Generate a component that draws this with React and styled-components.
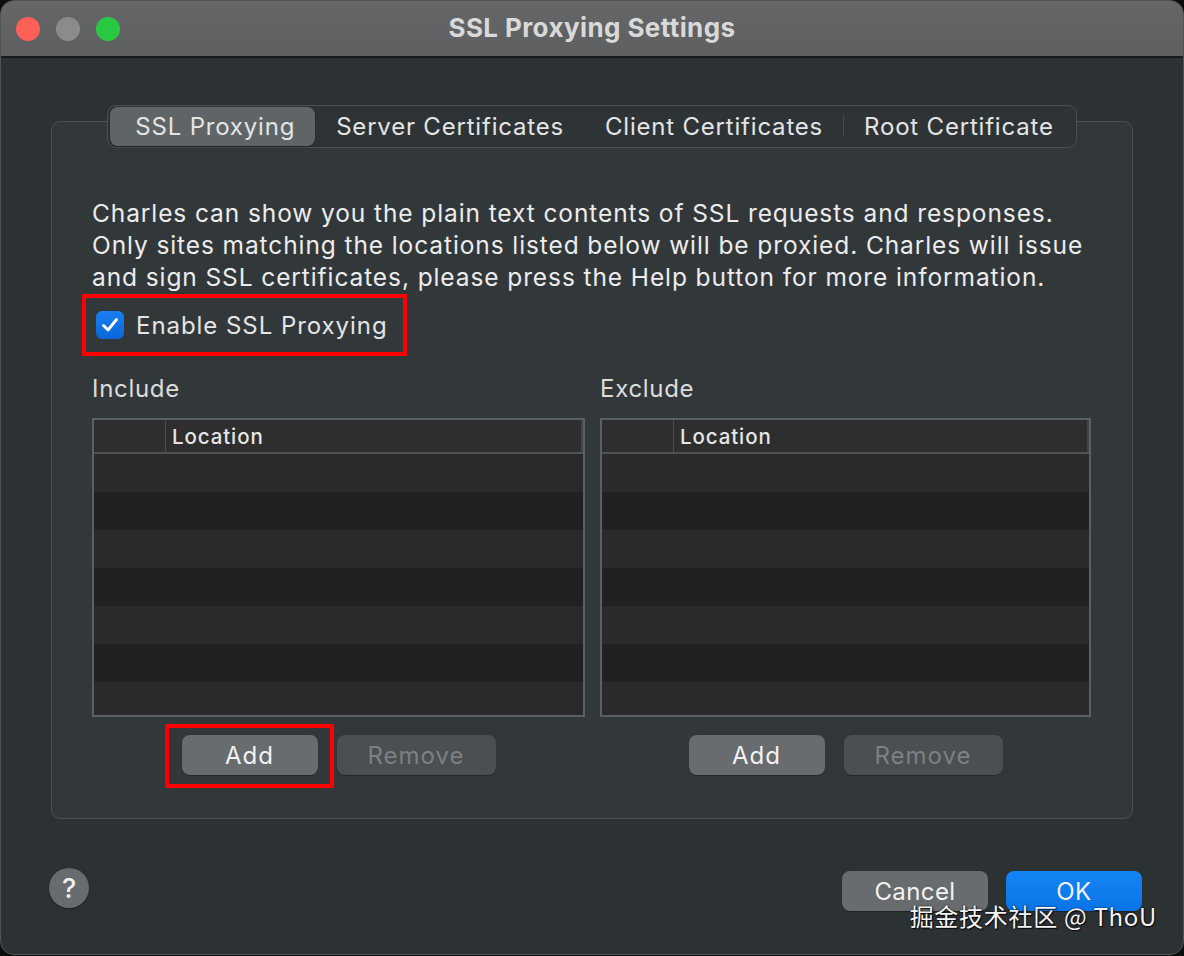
import React from "react";
import styled, { createGlobalStyle } from "styled-components";

const GlobalStyle = createGlobalStyle`
  html, body { margin: 0; padding: 0; background: #0d0e0f; }
  body { font-family: Inter, "Noto Sans", "Noto Sans CJK SC", sans-serif; -webkit-font-smoothing: antialiased; }
  * { box-sizing: border-box; }
`;

const Window = styled.div`
  position: relative;
  width: 1184px;
  height: 955px;
  border-radius: 14px;
  overflow: hidden;
  background: #2c3133;
  border: 1px solid #4e5355;
  display: flex;
  flex-direction: column;
`;

const TitleBar = styled.div`
  height: 57px;
  flex: none;
  background: linear-gradient(#646668, #5d5f61);
  border-bottom: 2px solid #17191a;
  display: grid;
  grid-template-columns: 1fr auto 1fr;
  align-items: center;
`;

const Lights = styled.div`
  display: flex;
  gap: 16px;
  padding-left: 15px;
`;

const Light = styled.span`
  width: 24px;
  height: 24px;
  border-radius: 50%;
  background: ${(p) => p.$color};
`;

const Title = styled.div`
  font-size: 26px;
  font-weight: 700;
  color: #d9d9d9;
  letter-spacing: 0.4px;
  margin-top: -2px;
`;

const Body = styled.div`
  flex: 1;
  display: flex;
  flex-direction: column;
  padding-top: 47px;
`;

const TabArea = styled.div`
  margin: 0 50px;
  display: flex;
  flex-direction: column;
  align-items: center;
`;

const TabBar = styled.div`
  position: relative;
  z-index: 1;
  display: flex;
  align-items: center;
  height: 43px;
  padding: 0 2px;
  border: 1px solid #4a4f51;
  border-radius: 9px;
  background: #2e3436;
`;

const Tab = styled.div`
  height: 39px;
  display: flex;
  align-items: center;
  padding: 0 20px 0 ${(p) => (p.$first ? 25 : 21)}px;
  font-size: 24px;
  letter-spacing: 0.8px;
  color: #e4e4e4;
  border-radius: 8px;
  background: ${(p) => (p.$active ? "#5f6466" : "transparent")};
  box-shadow: ${(p) => (p.$active ? "0 1px 2px rgba(0,0,0,0.35)" : "none")};
  position: relative;
  & + &::before {
    content: "";
    position: absolute;
    left: 0;
    top: 9px;
    bottom: 9px;
    width: 1px;
    background: ${(p) => (p.$afterActive ? "transparent" : "#464b4d")};
  }
`;

const GroupBox = styled.div`
  align-self: stretch;
  margin-top: -27px;
  height: 698px;
  border: 1.5px solid #4a5052;
  border-radius: 9px;
  background: #32383a;
  padding: 75px 41px 0 40px;
  display: flex;
  flex-direction: column;
`;

const Paragraph = styled.p`
  margin: 0;
  font-size: 24.5px;
  letter-spacing: 0.9px;
  line-height: 32px;
  color: #ececec;
  white-space: nowrap;
`;

const CheckRow = styled.label`
  position: relative;
  margin-top: 18px;
  margin-left: 4px;
  align-self: flex-start;
  display: flex;
  align-items: center;
  gap: 12px;
  height: 28px;
  font-size: 24px;
  letter-spacing: 0.95px;
  color: #e4e4e4;
  &::after {
    content: "";
    position: absolute;
    left: -14px;
    right: -19px;
    top: -17px;
    bottom: -17px;
    border: 4px solid #ff0000;
  }
`;

const CheckBox = styled.span`
  width: 28px;
  height: 28px;
  border-radius: 6px;
  background: linear-gradient(#1a7ff2, #0a66d8);
  display: flex;
  align-items: center;
  justify-content: center;
`;

const Columns = styled.div`
  margin-top: 34px;
  display: grid;
  grid-template-columns: 493px 491px;
  column-gap: 15px;
`;

const Column = styled.div`
  display: flex;
  flex-direction: column;
`;

const Label = styled.div`
  font-size: 24px;
  letter-spacing: 0.7px;
  line-height: 32px;
  color: #dcdcdc;
`;

const Table = styled.div`
  margin-top: 13px;
  height: 299px;
  border: 2px solid #5c6062;
  background: #2a2a2a;
  display: flex;
  flex-direction: column;
  overflow: hidden;
`;

const Header = styled.div`
  height: 34px;
  flex: none;
  background: #2e2e2e;
  border-bottom: 2px solid #4f5355;
  display: flex;
  align-items: center;
`;

const HeaderCell = styled.div`
  height: 100%;
  display: flex;
  align-items: center;
  width: ${(p) => p.$width || "auto"};
  flex: ${(p) => (p.$grow ? 1 : "none")};
  padding-left: ${(p) => (p.$grow ? 6 : 0)}px;
  border-right: 1px solid #4d4d4d;
  font-size: 20.5px;
  letter-spacing: 0.9px;
  font-weight: 500;
  color: #e6e6e6;
  border-right-width: ${(p) => (p.$grow ? "2px" : "1px")};
  &:last-child { border-right-color: #444; }
`;

const Row = styled.div`
  height: 38px;
  flex: none;
  background: ${(p) => (p.$odd ? "#212121" : "#2a2a2a")};
`;

const ButtonRow = styled.div`
  margin-top: 18px;
  display: flex;
  justify-content: center;
  gap: 19px;
`;

const Button = styled.button`
  position: relative;
  height: 40px;
  width: ${(p) => p.$width}px;
  border: none;
  border-radius: 8px;
  font-family: inherit;
  font-size: 24px;
  letter-spacing: ${(p) => p.$spacing ?? 1}px;
  padding: 0;
  background: ${(p) =>
    p.$primary ? "linear-gradient(#1585f5, #0a74e6)" : p.$disabled ? "#4a4f51" : "#686c6e"};
  color: ${(p) => (p.$disabled ? "#7c8082" : "#f2f2f2")};
  box-shadow: 0 1px 1px rgba(0, 0, 0, 0.3);
  ${(p) =>
    p.$highlight &&
    `&::after {
      content: "";
      position: absolute;
      left: -17px;
      right: -16px;
      top: -11px;
      bottom: -13px;
      border: 4px solid #ff0000;
    }`}
`;

const Footer = styled.div`
  margin-top: 49px;
  padding: 0 41px 0 48px;
  display: flex;
  justify-content: space-between;
  align-items: flex-start;
`;

const HelpButton = styled.div`
  width: 40px;
  height: 40px;
  border-radius: 50%;
  background: #686c6e;
  color: #f0f0f0;
  font-size: 27px;
  font-weight: 500;
  display: flex;
  align-items: center;
  justify-content: center;
  box-shadow: 0 1px 2px rgba(0, 0, 0, 0.35);
`;

const DialogButtons = styled.div`
  margin-top: 3px;
  display: flex;
  gap: 18px;
`;

const Watermark = styled.div`
  position: absolute;
  right: 26px;
  top: 899px;
  font-size: 24px;
  line-height: 32px;
  color: #f4f4f4;
  font-family: "Noto Sans CJK SC", Inter, sans-serif;
  text-shadow: 0 0 2px rgba(0,0,0,0.9), 1px 1px 1px rgba(0,0,0,0.8);
  letter-spacing: 0.7px;
`;

function LocationTable() {
  const rows = [0, 1, 2, 3, 4, 5, 6];
  return (
    <Table>
      <Header>
        <HeaderCell $width="72px" />
        <HeaderCell $grow>Location</HeaderCell>
      </Header>
      {rows.map((r) => (
        <Row key={r} $odd={r % 2 === 1} />
      ))}
    </Table>
  );
}

export default function App() {
  const tabs = ["SSL Proxying", "Server Certificates", "Client Certificates", "Root Certificate"];
  return (
    <>
      <GlobalStyle />
      <Window>
        <TitleBar>
          <Lights>
            <Light $color="#fe5f57" />
            <Light $color="#8a8b8d" />
            <Light $color="#28c840" />
          </Lights>
          <Title>SSL Proxying Settings</Title>
          <div />
        </TitleBar>
        <Body>
          <TabArea>
            <TabBar>
              {tabs.map((t, i) => (
                <Tab key={t} $active={i === 0} $first={i === 0} $afterActive={i === 1}>
                  {t}
                </Tab>
              ))}
            </TabBar>
            <GroupBox>
              <Paragraph>
                Charles can show you the plain text contents of SSL requests and responses.
                <br />
                Only sites matching the locations listed below will be proxied. Charles will issue
                <br />
                and sign SSL certificates, please press the Help button for more information.
              </Paragraph>
              <CheckRow>
                <CheckBox>
                  <svg width="20" height="20" viewBox="0 0 20 20">
                    <path d="M3.5 10.5 L8 15 L16.5 4.5" fill="none" stroke="#fff" strokeWidth="2.8" strokeLinecap="round" strokeLinejoin="round" />
                  </svg>
                </CheckBox>
                Enable SSL Proxying
              </CheckRow>
              <Columns>
                <Column>
                  <Label>Include</Label>
                  <LocationTable />
                  <ButtonRow>
                    <Button $width={136} $highlight>Add</Button>
                    <Button $width={159} $disabled>Remove</Button>
                  </ButtonRow>
                </Column>
                <Column>
                  <Label>Exclude</Label>
                  <LocationTable />
                  <ButtonRow>
                    <Button $width={136}>Add</Button>
                    <Button $width={159} $disabled>Remove</Button>
                  </ButtonRow>
                </Column>
              </Columns>
            </GroupBox>
          </TabArea>
          <Footer>
            <HelpButton>?</HelpButton>
            <DialogButtons>
              <Button $width={146} $spacing={0.4}>Cancel</Button>
              <Button $width={136} $primary $spacing={0.4}>OK</Button>
            </DialogButtons>
          </Footer>
        </Body>
        <Watermark>掘金技术社区 @ ThoU</Watermark>
      </Window>
    </>
  );
}
